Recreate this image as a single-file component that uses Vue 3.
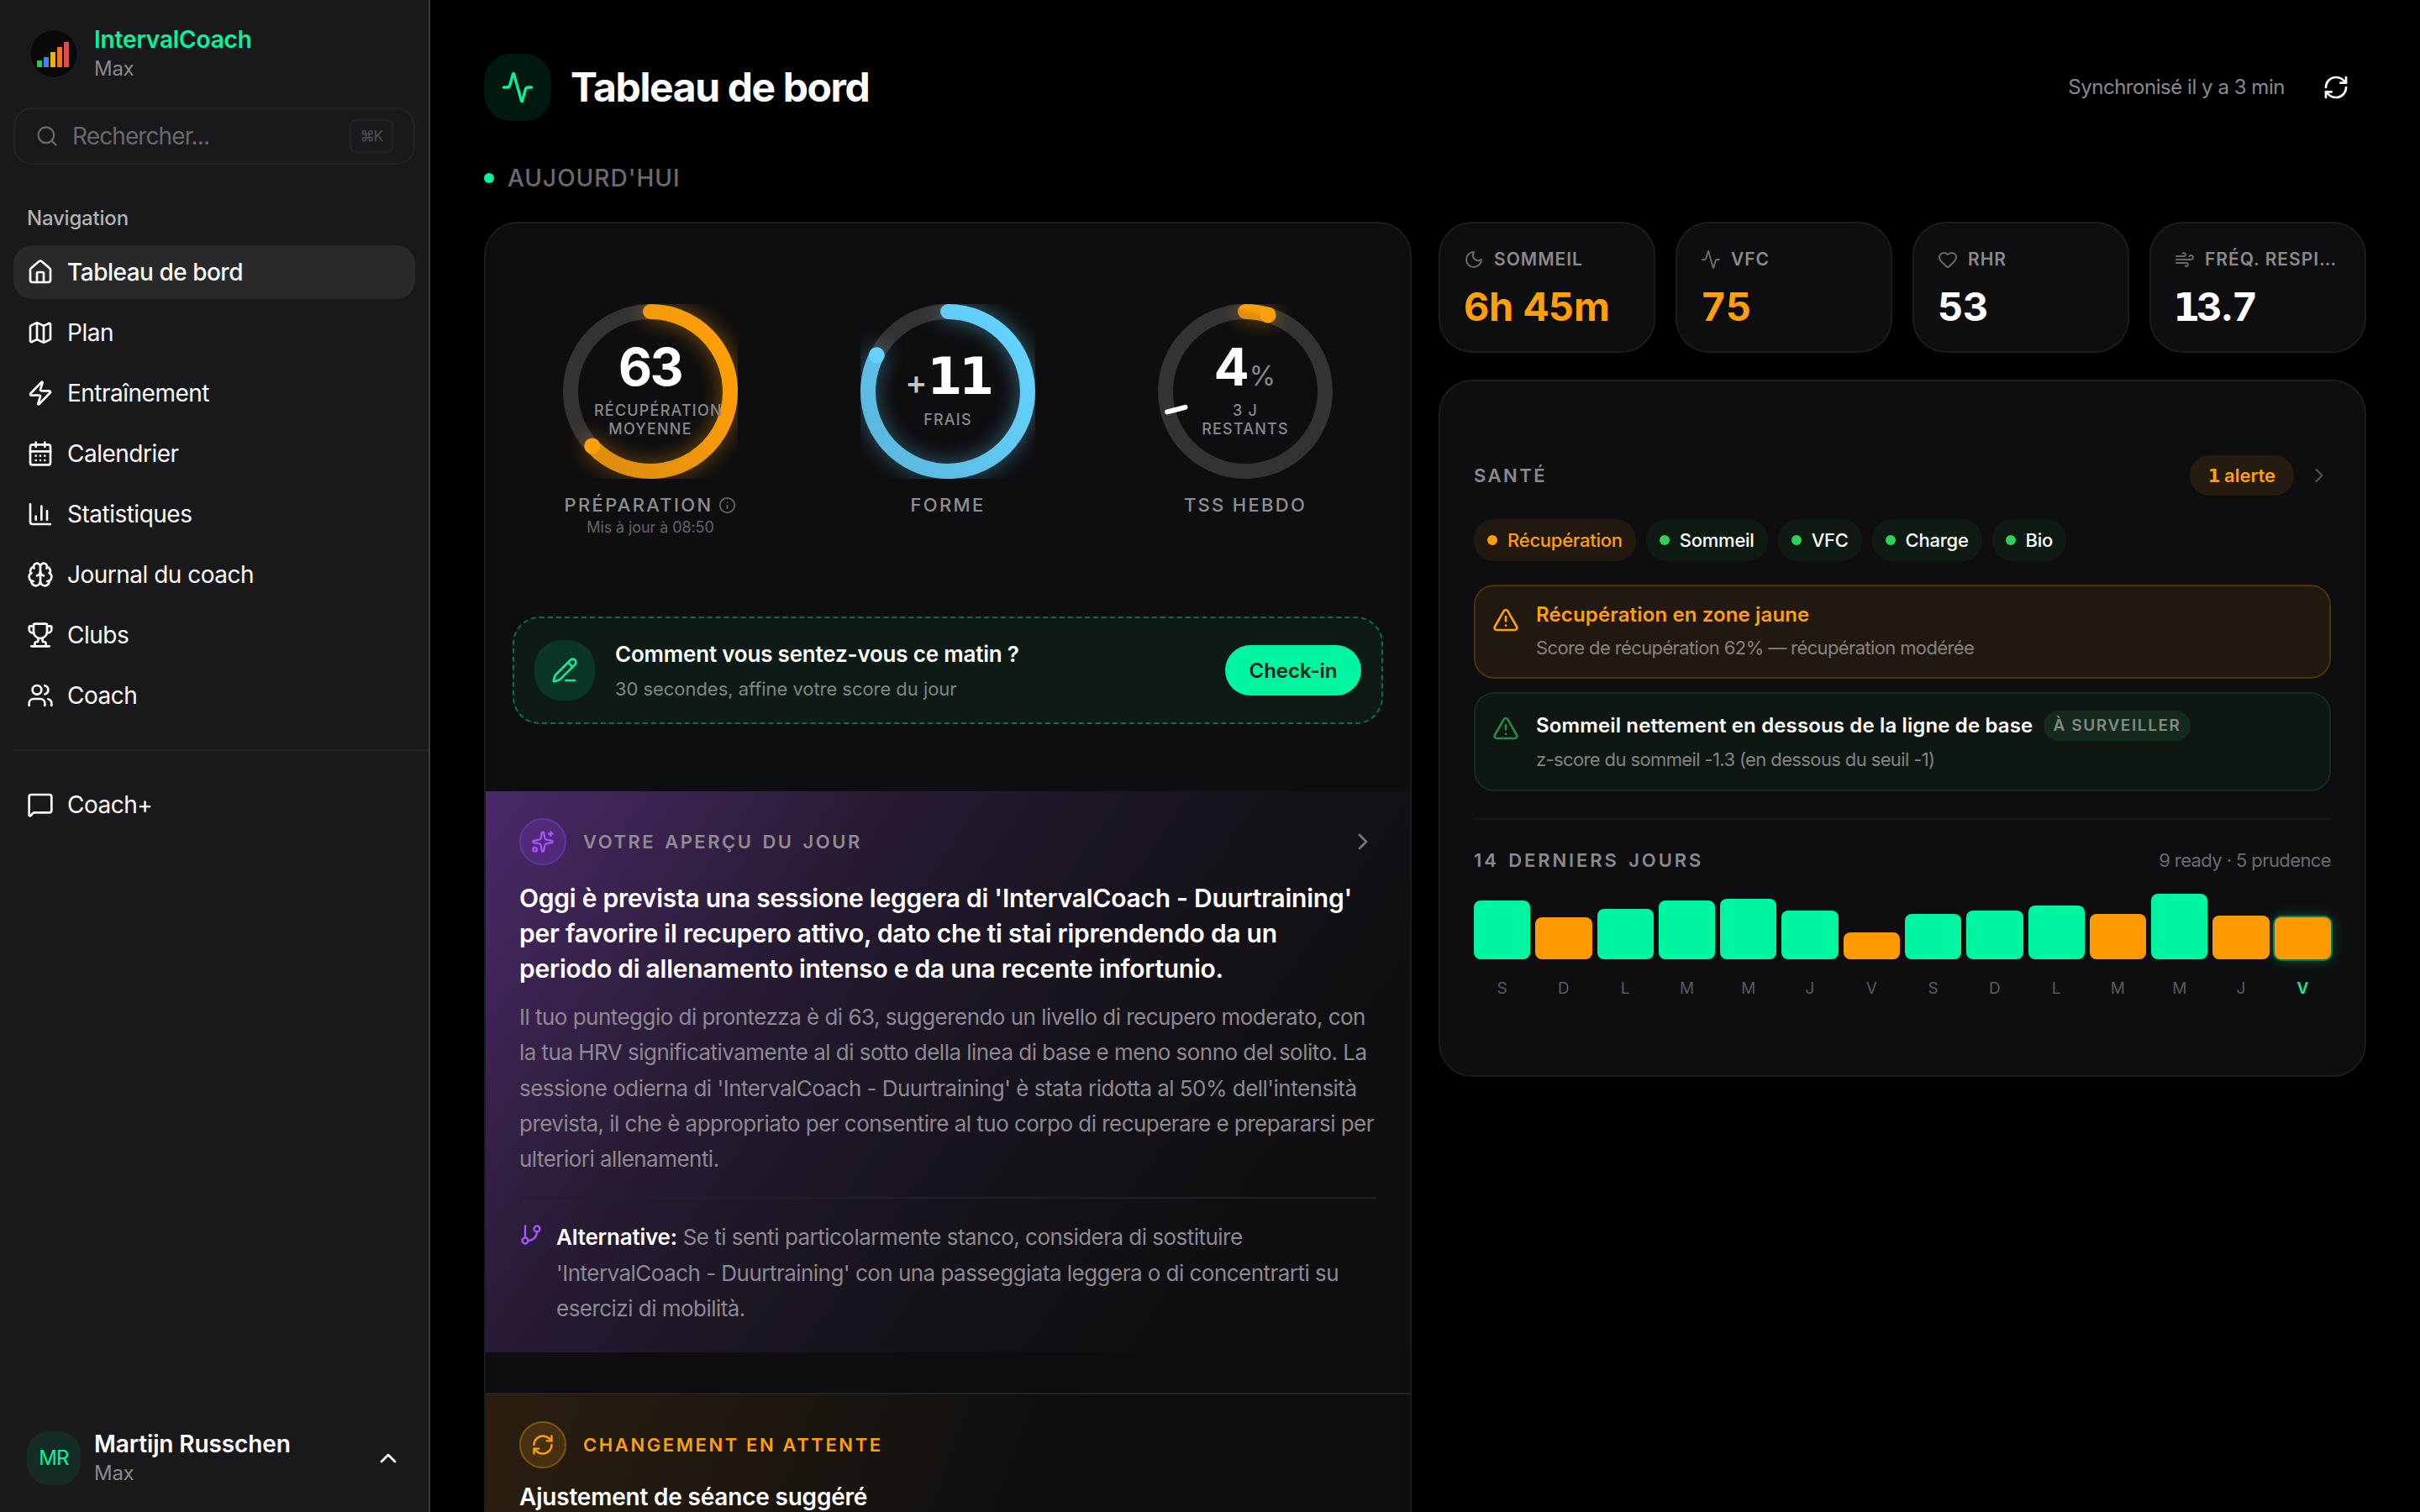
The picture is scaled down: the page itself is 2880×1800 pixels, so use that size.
<script setup>
import { h } from 'vue'

const icons = {
  house: ['M15 21v-8a1 1 0 0 0-1-1h-4a1 1 0 0 0-1 1v8', 'M3 10a2 2 0 0 1 .709-1.528l7-5.999a2 2 0 0 1 2.582 0l7 5.999A2 2 0 0 1 21 10v9a2 2 0 0 1-2 2H5a2 2 0 0 1-2-2z'],
  map: ['M14.106 5.553a2 2 0 0 0 1.788 0l3.659-1.83A1 1 0 0 1 21 4.619v12.764a1 1 0 0 1-.553.894l-4.553 2.277a2 2 0 0 1-1.788 0l-4.212-2.106a2 2 0 0 0-1.788 0l-3.659 1.83A1 1 0 0 1 3 19.381V6.618a1 1 0 0 1 .553-.894l4.553-2.277a2 2 0 0 1 1.788 0z', 'M15 5.764v15', 'M9 3.236v15'],
  zap: ['M4 14a1 1 0 0 1-.78-1.63l9.9-10.2a.5.5 0 0 1 .86.46l-1.92 6.02A1 1 0 0 0 13 10h7a1 1 0 0 1 .78 1.63l-9.9 10.2a.5.5 0 0 1-.86-.46l1.92-6.02A1 1 0 0 0 11 14z'],
  calendar: ['M8 2v4', 'M16 2v4', 'M5 4h14a2 2 0 0 1 2 2v14a2 2 0 0 1-2 2H5a2 2 0 0 1-2-2V6a2 2 0 0 1 2-2z', 'M3 10h18', 'M8 14h.01', 'M12 14h.01', 'M16 14h.01', 'M8 18h.01', 'M12 18h.01', 'M16 18h.01'],
  chart: ['M3 3v16a2 2 0 0 0 2 2h16', 'M18 17V9', 'M13 17V5', 'M8 17v-3'],
  brain: ['M12 18V5', 'M15 13a4.17 4.17 0 0 1-3-4 4.17 4.17 0 0 1-3 4', 'M17.598 6.5A3 3 0 1 0 12 5a3 3 0 1 0-5.598 1.5', 'M17.997 5.125a4 4 0 0 1 2.526 5.77', 'M18 18a4 4 0 0 0 2-7.464', 'M19.967 17.483A4 4 0 1 1 12 18a4 4 0 1 1-7.967-.517', 'M6 18a4 4 0 0 1-2-7.464', 'M6.003 5.125a4 4 0 0 0-2.526 5.77'],
  trophy: ['M6 9a6 6 0 0 0 12 0V3a1 1 0 0 0-1-1H7a1 1 0 0 0-1 1z', 'M6 4H3a1 1 0 0 0-1 1v2a3 3 0 0 0 3 3h1', 'M18 4h3a1 1 0 0 1 1 1v2a3 3 0 0 1-3 3h-1', 'M10 15v2a1 1 0 0 1-1 1 2 2 0 0 0-2 2v2', 'M14 15v2a1 1 0 0 0 1 1 2 2 0 0 1 2 2v2', 'M4 22h16'],
  users: ['M16 21v-2a4 4 0 0 0-4-4H6a4 4 0 0 0-4 4v2', 'M13 7a4 4 0 1 1-8 0 4 4 0 0 1 8 0z', 'M22 21v-2a4 4 0 0 0-3-3.87', 'M16 3.13a4 4 0 0 1 0 7.75'],
  message: ['M22 17a2 2 0 0 1-2 2H6.828a2 2 0 0 0-1.414.586l-2.202 2.202A.71.71 0 0 1 2 21.286V5a2 2 0 0 1 2-2h16a2 2 0 0 1 2 2z'],
  search: ['M19 11a8 8 0 1 1-16 0 8 8 0 0 1 16 0z', 'm21 21-4.34-4.34'],
  activity: ['M22 12h-2.48a2 2 0 0 0-1.93 1.46l-2.35 8.36a.25.25 0 0 1-.48 0L9.24 2.18a.25.25 0 0 0-.48 0l-2.35 8.36A2 2 0 0 1 4.49 12H2'],
  refresh: ['M3 12a9 9 0 0 1 9-9 9.75 9.75 0 0 1 6.74 2.74L21 8', 'M21 3v5h-5', 'M21 12a9 9 0 0 1-9 9 9.75 9.75 0 0 1-6.74-2.74L3 16', 'M8 16H3v5'],
  moon: ['M20.985 12.486a9 9 0 1 1-9.473-9.472c.405-.022.617.46.402.803a6 6 0 0 0 8.268 8.268c.344-.215.825-.004.803.401'],
  heart: ['M2 9.5a5.5 5.5 0 0 1 9.591-3.676.56.56 0 0 0 .818 0A5.49 5.49 0 0 1 22 9.5c0 2.29-1.5 4-3 5.5l-5.492 5.313a2 2 0 0 1-3 .019L5 15c-1.5-1.5-3-3.2-3-5.5'],
  wind: ['M12.8 19.6A2 2 0 1 0 14 16H2', 'M17.5 8a2.5 2.5 0 1 1 2 4H2', 'M9.8 4.4A2 2 0 1 1 11 8H2'],
  alert: ['m21.73 18-8-14a2 2 0 0 0-3.48 0l-8 14A2 2 0 0 0 4 21h16a2 2 0 0 0 1.73-3', 'M12 9v4', 'M12 17h.01'],
  pencil: ['M13 21h8', 'm15 5 4 4', 'M21.174 6.812a1 1 0 0 0-3.986-3.987L3.842 16.174a2 2 0 0 0-.5.83l-1.321 4.352a.5.5 0 0 0 .623.622l4.353-1.32a2 2 0 0 0 .83-.497z'],
  sparkles: ['M11.017 2.814a1 1 0 0 1 1.966 0l1.051 5.558a2 2 0 0 0 1.594 1.594l5.558 1.051a1 1 0 0 1 0 1.966l-5.558 1.051a2 2 0 0 0-1.594 1.594l-1.051 5.558a1 1 0 0 1-1.966 0l-1.051-5.558a2 2 0 0 0-1.594-1.594l-5.558-1.051a1 1 0 0 1 0-1.966l5.558-1.051a2 2 0 0 0 1.594-1.594z', 'M20 2v4', 'M22 4h-4', 'M6 20a2 2 0 1 1-4 0 2 2 0 0 1 4 0z'],
  branch: ['M6 3v12', 'M21 6a3 3 0 1 1-6 0 3 3 0 0 1 6 0z', 'M9 18a3 3 0 1 1-6 0 3 3 0 0 1 6 0z', 'M18 9a9 9 0 0 1-9 9'],
  info: ['M22 12a10 10 0 1 1-20 0 10 10 0 0 1 20 0z', 'M12 16v-4', 'M12 8h.01'],
  right: ['m9 18 6-6-6-6'],
  up: ['m18 15-6-6-6 6']
}

const Icon = (props) =>
  h(
    'svg',
    { class: 'icon', width: props.size, height: props.size, viewBox: '0 0 24 24' },
    icons[props.name].map((d) => h('path', { d }))
  )
Icon.props = ['name', 'size']

const nav = [
  { icon: 'house', label: 'Tableau de bord', active: true },
  { icon: 'map', label: 'Plan' },
  { icon: 'zap', label: 'Entraînement' },
  { icon: 'calendar', label: 'Calendrier' },
  { icon: 'chart', label: 'Statistiques' },
  { icon: 'brain', label: 'Journal du coach' },
  { icon: 'trophy', label: 'Clubs' },
  { icon: 'users', label: 'Coach' }
]

const R = 95

const rings = [
  { id: 'prep', color: '#ff9f0a', value: '63', caption: 'Récupération moyenne', label: 'Préparation', info: true, sub: 'Mis à jour à 08:50', pct: 0.63 },
  { id: 'form', color: '#64d2ff', prefix: '+', value: '11', caption: 'Frais', label: 'Forme', pct: 0.825 },
  { id: 'tss', color: '#ff9f0a', value: '4', suffix: '%', caption: '3 j restants', label: 'TSS hebdo', pct: 0.046, tick: 0.709 }
]

// point on the ring, measured clockwise from the top
const polar = (pct, r) => {
  const a = pct * 2 * Math.PI
  return { x: 104 + r * Math.sin(a), y: 104 - r * Math.cos(a) }
}

const metrics = [
  { icon: 'moon', label: 'Sommeil', value: '6h 45m', warn: true },
  { icon: 'activity', label: 'VFC', value: '75', warn: true },
  { icon: 'heart', label: 'RHR', value: '53' },
  { icon: 'wind', label: 'Fréq. respiratoire', one: '1', value: '3.7' }
]

const pills = [
  { label: 'Récupération', warn: true },
  { label: 'Sommeil' },
  { label: 'VFC' },
  { label: 'Charge' },
  { label: 'Bio' }
]

const days = [
  { d: 'S', v: 70 },
  { d: 'D', v: 50, warn: true },
  { d: 'L', v: 60 },
  { d: 'M', v: 70 },
  { d: 'M', v: 72 },
  { d: 'J', v: 58 },
  { d: 'V', v: 32, warn: true },
  { d: 'S', v: 54 },
  { d: 'D', v: 58 },
  { d: 'L', v: 64 },
  { d: 'M', v: 54, warn: true },
  { d: 'M', v: 78 },
  { d: 'J', v: 52, warn: true },
  { d: 'V', v: 50, warn: true, today: true }
]
</script>

<template>
  <div class="app">
    <aside class="sidebar">
      <div class="brand">
        <svg class="logo" width="58" height="58" viewBox="0 0 58 58">
          <circle cx="29" cy="29" r="28.5" fill="#0a0a0a" stroke="#232325" />
          <rect x="9" y="37" width="6" height="8" fill="#22c55e" />
          <rect x="17" y="33" width="6" height="12" fill="#3b82f6" />
          <rect x="25" y="27" width="6" height="18" fill="#eab308" />
          <rect x="33" y="21" width="6" height="24" fill="#f97316" />
          <rect x="41" y="15" width="6" height="30" fill="#ef4444" />
        </svg>
        <div>
          <div class="brand-name">IntervalCoach</div>
          <div class="brand-plan">Max</div>
        </div>
      </div>

      <div class="search">
        <Icon name="search" size="28" />
        <span class="search-text">Rechercher...</span>
        <kbd>⌘K</kbd>
      </div>

      <div class="nav-title">Navigation</div>
      <nav class="nav">
        <a v-for="n in nav" :key="n.label" class="nav-item" :class="{ active: n.active }">
          <Icon :name="n.icon" size="32" />
          <span>{{ n.label }}</span>
        </a>
      </nav>

      <div class="nav-sep"></div>
      <nav class="nav">
        <a class="nav-item">
          <Icon name="message" size="32" />
          <span>Coach+</span>
        </a>
      </nav>

      <div class="user">
        <div class="avatar">MR</div>
        <div class="user-text">
          <div class="user-name">Martijn Russchen</div>
          <div class="user-plan">Max</div>
        </div>
        <Icon name="up" size="32" />
      </div>
    </aside>

    <main class="main">
      <header class="header">
        <div class="header-icon"><Icon name="activity" size="40" /></div>
        <h1>Tableau de bord</h1>
        <span class="sync">Synchronisé il y a 3 min</span>
        <Icon name="refresh" size="32" class="sync-icon" />
      </header>

      <div class="today-title"><i class="today-dot"></i>Aujourd'hui</div>

      <div class="columns">
        <section class="card hero">
          <div class="rings">
            <div v-for="r in rings" :key="r.id" class="ring">
              <div class="ring-dial">
                <svg width="208" height="208" viewBox="0 0 208 208">
                  <defs>
                    <linearGradient :id="r.id" x1="0" y1="1" x2="1" y2="0.3">
                      <stop offset="0.1" :stop-color="r.color" stop-opacity="0.8" />
                      <stop offset="1" :stop-color="r.color" />
                    </linearGradient>
                  </defs>
                  <circle cx="104" cy="104" :r="R" fill="none" stroke="#333333" stroke-width="18" />
                  <g :style="{ filter: `drop-shadow(0 0 12px ${r.color}80)` }">
                    <path
                      :d="`M104 9A95 95 0 ${r.pct > 0.5 ? 1 : 0} 1 ${polar(r.pct, R).x} ${polar(r.pct, R).y}`"
                      fill="none"
                      :stroke="`url(#${r.id})`"
                      stroke-width="18"
                      stroke-linecap="round"
                    />
                    <circle :cx="polar(r.pct, R).x" :cy="polar(r.pct, R).y" r="9.5" :fill="r.color" />
                  </g>
                  <line
                    v-if="r.tick"
                    :x1="polar(r.tick, 96).x"
                    :y1="polar(r.tick, 96).y"
                    :x2="polar(r.tick, 74).x"
                    :y2="polar(r.tick, 74).y"
                    stroke="#fff"
                    stroke-width="6"
                    stroke-linecap="round"
                  />
                </svg>
                <div class="ring-center">
                  <div class="ring-value">
                    <small v-if="r.prefix">{{ r.prefix }}</small><b :class="{ slab: r.value === '11' }">{{ r.value }}</b><em v-if="r.suffix">{{ r.suffix }}</em>
                  </div>
                  <div class="ring-caption">{{ r.caption }}</div>
                </div>
              </div>
              <div class="ring-label">{{ r.label }}<Icon v-if="r.info" name="info" size="21" /></div>
              <div class="ring-sub">{{ r.sub }}</div>
            </div>
          </div>

          <div class="checkin">
            <div class="checkin-icon"><Icon name="pencil" size="32" /></div>
            <div class="checkin-text">
              <div class="checkin-title">Comment vous sentez-vous ce matin ?</div>
              <div class="checkin-sub">30 secondes, affine votre score du jour</div>
            </div>
            <button class="checkin-btn">Check-in</button>
          </div>

          <div class="insight">
            <div class="insight-head">
              <span class="badge-icon purple"><Icon name="sparkles" size="28" /></span>
              <span class="eyebrow">Votre aperçu du jour</span>
              <Icon name="right" size="32" class="insight-go" />
            </div>
            <p class="lead">
              Oggi è prevista una sessione leggera di 'IntervalCoach - Duurtraining'<br />
              per favorire il recupero attivo, dato che ti stai riprendendo da un<br />
              periodo di allenamento intenso e da una recente infortunio.
            </p>
            <p class="body">
              Il tuo punteggio di prontezza è di 63, suggerendo un livello di recupero moderato, con<br />
              la tua HRV significativamente al di sotto della linea di base e meno sonno del solito. La<br />
              sessione odierna di 'IntervalCoach - Duurtraining' è stata ridotta al 50% dell'intensità<br />
              prevista, il che è appropriato per consentire al tuo corpo di recuperare e prepararsi per<br />
              ulteriori allenamenti.
            </p>
            <div class="alt">
              <Icon name="branch" size="28" />
              <p class="body alt-text">
                <strong>Alternative:</strong> Se ti senti particolarmente stanco, considera di sostituire<br />
                'IntervalCoach - Duurtraining' con una passeggiata leggera o di concentrarti su<br />
                esercizi di mobilità.
              </p>
            </div>
          </div>

          <div class="pending">
            <div class="insight-head">
              <span class="badge-icon amber"><Icon name="refresh" size="28" /></span>
              <span class="eyebrow">Changement en attente</span>
            </div>
            <p class="lead">Ajustement de séance suggéré</p>
          </div>
        </section>

        <div class="side">
          <div class="metrics">
            <div v-for="m in metrics" :key="m.label" class="card metric">
              <div class="metric-head">
                <Icon :name="m.icon" size="24" />
                <span>{{ m.label }}</span>
              </div>
              <div class="metric-value" :class="{ warn: m.warn }"><span v-if="m.one" class="slab">{{ m.one }}</span>{{ m.value }}</div>
            </div>
          </div>

          <section class="card health">
            <div class="health-head">
              <span class="eyebrow">Santé</span>
              <span class="count"><span class="slab">1</span> alerte</span>
              <Icon name="right" size="28" class="dim" />
            </div>

            <div class="pills">
              <span v-for="p in pills" :key="p.label" class="pill" :class="{ warn: p.warn }"><i></i>{{ p.label }}</span>
            </div>

            <div class="alert warn">
              <Icon name="alert" size="32" />
              <div>
                <div class="alert-title">Récupération en zone jaune</div>
                <div class="alert-sub">Score de récupération 62% — récupération modérée</div>
              </div>
            </div>
            <div class="alert ok">
              <Icon name="alert" size="32" />
              <div>
                <div class="alert-title">Sommeil nettement en dessous de la ligne de base <span class="tag">À surveiller</span></div>
                <div class="alert-sub">z-score du sommeil -1.3 (en dessous du seuil -1)</div>
              </div>
            </div>

            <div class="history">
              <div class="history-head">
                <span class="eyebrow">14 derniers jours</span>
                <span class="history-sum">9 ready · 5 prudence</span>
              </div>
              <div class="bars">
                <div v-for="(b, i) in days" :key="i" class="day" :class="{ today: b.today }">
                  <div class="bar" :class="{ warn: b.warn }" :style="{ height: b.v + 'px' }"></div>
                  <span>{{ b.d }}</span>
                </div>
              </div>
            </div>
          </section>
        </div>
      </div>
    </main>
  </div>
</template>

<style>
body {
  background: #000;
}
</style>

<style scoped>
.app {
  display: flex;
  width: 2880px;
  height: 1800px;
  overflow: hidden;
  background: #000;
  color: #fff;
  font-family: Inter, 'Liberation Sans', sans-serif;
  font-size: 28px;
}

.app * {
  box-sizing: border-box;
}

.icon {
  flex: none;
  fill: none;
  stroke: currentColor;
  stroke-width: 2;
  stroke-linecap: round;
  stroke-linejoin: round;
}

p,
h1 {
  margin: 0;
}

/* Sidebar */
.sidebar {
  display: flex;
  flex-direction: column;
  flex: none;
  width: 512px;
  background: #19191b;
  border-right: 2px solid #39393b;
}

.brand {
  display: flex;
  align-items: center;
  gap: 19px;
  height: 128px;
  padding-left: 35px;
}

.brand-name {
  line-height: 36px;
  margin-top: -1px;
  color: #00f5a0;
  font-weight: 600;
  letter-spacing: -0.15px;
}

.brand-plan,
.user-plan {
  line-height: 34px;
  font-size: 24px;
  letter-spacing: -0.3px;
  color: #8a8a8c;
}

.search {
  display: flex;
  align-items: center;
  height: 68px;
  margin: 0 16px;
  padding: 0 24px;
  border: 2px solid #242426;
  border-radius: 22px;
  color: #69696b;
}

.search-text {
  flex: 1;
  margin-left: 16px;
  letter-spacing: -0.9px;
}

kbd {
  width: 52px;
  height: 40px;
  border: 2px solid #242427;
  border-radius: 8px;
  background: #1b1b1e;
  color: #525254;
  font: 17px/36px Inter, sans-serif;
  letter-spacing: -1px;
  text-align: center;
}

.nav-title {
  margin: 48px 0 16px 32px;
  line-height: 32px;
  font-size: 24px;
  font-weight: 500;
  letter-spacing: -0.2px;
  color: #b2b2b3;
}

.nav {
  display: flex;
  flex-direction: column;
  gap: 8px;
  margin: 0 16px;
}

.nav-item {
  display: flex;
  align-items: center;
  gap: 16px;
  height: 64px;
  padding: 0 16px;
  border-radius: 22px;
  color: #fafafa;
  letter-spacing: -0.5px;
}

.nav-item.active {
  background: #29292b;
  font-weight: 500;
}

.nav-sep {
  height: 2px;
  margin: 32px 0 32px 16px;
  background: #252527;
}

.user {
  display: flex;
  align-items: center;
  gap: 16px;
  height: 96px;
  margin: auto 32px 16px;
}

.avatar {
  width: 64px;
  height: 64px;
  border-radius: 26px;
  background: #152b25;
  color: #00f5a0;
  font-size: 24px;
  letter-spacing: -0.8px;
  line-height: 64px;
  text-align: center;
}

.user-text {
  flex: 1;
}

.user-name {
  line-height: 36px;
  font-weight: 600;
  letter-spacing: -0.12px;
}

/* Main area */
.main {
  flex: 1;
  padding: 64px 64px 0;
}

.header {
  display: flex;
  align-items: center;
  height: 80px;
}

.header-icon {
  display: flex;
  align-items: center;
  justify-content: center;
  width: 80px;
  height: 80px;
  border-radius: 32px;
  background: #00190f;
  color: #00f5a0;
}

h1 {
  flex: 1;
  margin: -2px 0 0 23px;
  font-size: 48px;
  font-weight: 700;
  letter-spacing: -1.4px;
}

.sync {
  margin-top: -1px;
  font-size: 24px;
  letter-spacing: -0.46px;
  color: #8a8a8c;
}

.sync-icon {
  margin: 0 20px 0 45px;
}

.today-title {
  display: flex;
  align-items: center;
  margin: 50px 0 34px;
  line-height: 36px;
  font-weight: 500;
  letter-spacing: 1px;
  text-transform: uppercase;
  color: #6b6b6d;
}

.today-dot {
  width: 12px;
  height: 12px;
  margin-right: 16px;
  border-radius: 50%;
  background: #00f5a0;
}

.columns {
  display: grid;
  grid-template-columns: 1fr 1fr;
  gap: 32px;
  align-items: start;
}

.card {
  border: 2px solid #1c1c1e;
  border-radius: 40px;
  background: #0e0e10;
}

.hero {
  overflow: hidden;
}

/* the "1" with a foot comes from DejaVu */
.slab {
  font-family: 'DejaVu Sans', sans-serif;
}

/* Rings */
.rings {
  display: grid;
  grid-template-columns: repeat(3, 354px);
  justify-content: center;
  padding-top: 96px;
}

.ring {
  display: flex;
  flex-direction: column;
  align-items: center;
}

.ring-dial {
  display: grid;
  place-items: center;
  width: 208px;
  height: 208px;
}

.ring-dial > * {
  grid-area: 1 / 1;
}

.ring-center {
  z-index: 1;
  width: 134px;
  margin-top: -6px;
  text-align: center;
}

.ring-value {
  height: 66px;
  line-height: 66px;
  white-space: nowrap;
}

.ring-value b {
  font-size: 62px;
  font-weight: 700;
  font-feature-settings: 'tnum';
  letter-spacing: -2px;
}

.ring-value b.slab {
  font-size: 60px;
  letter-spacing: -4px;
}

.ring-value small {
  font-size: 40px;
  font-weight: 500;
  color: #c7c7c8;
}

.ring-value em {
  margin-left: 3px;
  font-size: 32px;
  font-style: normal;
  color: #8a8a8c;
}

.ring-caption {
  margin-top: 8px;
  line-height: 22px;
  font-size: 18px;
  font-weight: 500;
  letter-spacing: 1.2px;
  text-transform: uppercase;
  color: #8a8a8c;
}

.ring-label {
  display: flex;
  align-items: center;
  gap: 7px;
  margin-top: 16px;
  line-height: 30px;
  font-size: 22px;
  font-weight: 500;
  letter-spacing: 2.3px;
  text-transform: uppercase;
  color: #8f8f91;
}

.ring-label .icon {
  color: #69696b;
}

.ring-sub {
  height: 24px;
  line-height: 24px;
  font-size: 18px;
  letter-spacing: -0.1px;
  color: #636365;
}

/* Check-in banner */
.checkin {
  display: flex;
  align-items: center;
  height: 128px;
  margin: 94px 32px 80px;
  padding: 0 24px;
  border: 2px dashed #0b6f4d;
  border-radius: 32px;
  background: #0d1a15;
}

.checkin-icon {
  display: flex;
  align-items: center;
  justify-content: center;
  width: 72px;
  height: 72px;
  border-radius: 32px;
  background: #0b3526;
  color: #15e69b;
}

.checkin-text {
  flex: 1;
  margin: 2px 0 0 24px;
}

.checkin-title {
  line-height: 42px;
  font-size: 26px;
  font-weight: 600;
  letter-spacing: -0.2px;
}

.checkin-sub {
  line-height: 40px;
  font-size: 22px;
  letter-spacing: -0.05px;
  color: #7f8784;
}

.checkin-btn {
  width: 162px;
  height: 60px;
  border: 0;
  border-radius: 30px;
  background: #00f5a0;
  color: #04291c;
  font: 600 24px Inter, sans-serif;
}

/* Insight */
.insight {
  height: 668px;
  padding: 32px 40px 0;
  background: linear-gradient(125deg, #4a2969 0%, #301f40 23%, #281b35 30%, #1f182a 40%, #151219 61%, #0f0f11 80%, #0e0e10 100%);
}

.insight-head {
  display: flex;
  align-items: center;
  height: 56px;
}

.badge-icon {
  display: flex;
  align-items: center;
  justify-content: center;
  width: 56px;
  height: 56px;
  margin-right: 20px;
  border: 2px solid;
  border-radius: 50%;
}

.badge-icon.purple {
  border-color: #66379a;
  background: #51297a;
  color: #a855f7;
}

.badge-icon.amber {
  border-color: #80550f;
  background: #463010;
  color: #ff9f0a;
}

.eyebrow {
  flex: 1;
  font-size: 22px;
  font-weight: 600;
  letter-spacing: 2.5px;
  word-spacing: 3px;
  text-transform: uppercase;
  color: #8f8b94;
}

.insight-go {
  color: #77777a;
}

.lead {
  margin-top: 18px;
  line-height: 42px;
  font-size: 30px;
  font-weight: 600;
  letter-spacing: -0.26px;
  white-space: nowrap;
}

.body {
  margin-top: 16px;
  line-height: 42.25px;
  font-size: 26px;
  letter-spacing: -0.53px;
  color: #8d8a91;
  white-space: nowrap;
}

.body strong {
  font-weight: 600;
  letter-spacing: -0.2px;
  color: #fff;
}

.alt {
  display: flex;
  gap: 16px;
  margin-top: 24px;
  padding-top: 24px;
  border-top: 2px solid #222024;
  color: #a855f7;
}

.alt .icon {
  margin-top: 5px;
}

.alt-text {
  margin-top: 1px;
}

.pending {
  height: 260px;
  margin-top: 48px;
  padding: 32px 40px 0;
  border-top: 2px solid #232325;
  background: linear-gradient(110deg, #2b1e10 0%, #1a150f 35%, #0e0e10 60%);
}

.pending .eyebrow {
  color: #ff9f0a;
  letter-spacing: 2.6px;
  word-spacing: 0;
}

.pending .lead {
  margin-top: 13px;
  font-size: 28px;
  letter-spacing: -0.2px;
}

/* Metrics */
.metrics {
  display: grid;
  grid-template-columns: repeat(4, 1fr);
  gap: 24px;
  margin-bottom: 32px;
}

.metric {
  min-width: 0;
  height: 156px;
  padding: 27px 28px 0;
}

.metric-head {
  display: flex;
  align-items: center;
  gap: 12px;
  line-height: 32px;
  font-size: 21px;
  font-weight: 600;
  letter-spacing: 1px;
  text-transform: uppercase;
  color: #8a8a8c;
}

.metric-head .icon {
  color: #69696b;
}

.metric-head span {
  overflow: hidden;
  text-overflow: ellipsis;
  white-space: nowrap;
}

.metric-value {
  height: 56px;
  margin-top: 12px;
  line-height: 56px;
  font-size: 47px;
  font-weight: 700;
  letter-spacing: -0.4px;
  font-feature-settings: 'tnum';
}

.metric-value .slab {
  margin-left: -2px;
  font-size: 46px;
  letter-spacing: -4px;
}

.metric-value.warn {
  color: #ff9f0a;
}

/* Health */
.health {
  height: 830px;
  padding: 88px 40px 0;
}

.health-head {
  display: flex;
  align-items: center;
  height: 48px;
}

.health-head .eyebrow,
.history-head .eyebrow {
  color: #8a8a8c;
}

.history-head .eyebrow {
  letter-spacing: 2.9px;
}

.count {
  width: 124px;
  height: 48px;
  margin-right: 16px;
  border-radius: 24px;
  background: #261b0f;
  color: #ff9f0a;
  font-size: 22px;
  font-weight: 600;
  line-height: 48px;
  text-align: center;
}

.count .slab {
  font-size: 21px;
  font-weight: 700;
  letter-spacing: -1px;
}

.dim {
  color: #515153;
}

.pills {
  display: flex;
  gap: 12px;
  margin: 28px 0;
}

.pill {
  display: flex;
  align-items: center;
  gap: 12px;
  height: 50px;
  padding: 0 16px;
  border-radius: 24px;
  background: #0f1a13;
  font-size: 22px;
  font-weight: 500;
  letter-spacing: -0.25px;
}

.pill i {
  width: 12px;
  height: 12px;
  border-radius: 50%;
  background: #30d158;
}

.pill.warn {
  background: #21190f;
  color: #ff9f0a;
}

.pill.warn i {
  background: #ff9f0a;
}

.alert {
  display: flex;
  gap: 20px;
  margin-bottom: 16px;
  padding: 0 20px;
  border: 2px solid;
  border-radius: 24px;
}

.alert.warn {
  height: 112px;
  padding-top: 14px;
  border-color: #4a3210;
  background: #21190f;
}

.alert.ok {
  height: 118px;
  padding-top: 18px;
  border-color: #142c1c;
  background: #0f1712;
}

.alert .icon {
  margin-top: 10px;
}

.alert.warn .icon,
.alert.warn .alert-title {
  color: #ff9f0a;
}

.alert.ok .icon {
  margin-top: 7px;
  color: #268a43;
}

.alert-title {
  display: flex;
  align-items: center;
  line-height: 40px;
  font-size: 24px;
  font-weight: 600;
  letter-spacing: 0.14px;
}

.alert-sub {
  line-height: 38px;
  font-size: 22px;
  letter-spacing: -0.62px;
  color: #858381;
}

.alert.ok .alert-sub {
  line-height: 41px;
}

.tag {
  height: 36px;
  margin-left: 13px;
  padding: 0 11px;
  border-radius: 18px;
  background: #142b1b;
  color: #848a86;
  font-size: 19px;
  line-height: 36px;
  letter-spacing: 1.6px;
  text-transform: uppercase;
}

.history {
  margin-top: 32px;
  border-top: 2px solid #171719;
}

.history-head {
  display: flex;
  align-items: center;
  height: 36px;
  margin: 30px 0 22px;
}

.history-sum {
  font-size: 22px;
  letter-spacing: -0.6px;
  color: #6b6b6d;
}

.bars {
  display: flex;
  align-items: flex-end;
  gap: 6px;
  height: 130px;
}

.day {
  flex: 1;
  text-align: center;
}

.day span {
  display: block;
  margin-top: 18px;
  line-height: 34px;
  font-size: 19px;
  color: #5a5a5c;
}

.bar {
  border-radius: 8px;
  background: #00f5a0;
}

.bar.warn {
  background: #ff9a00;
}

.today .bar {
  box-shadow: 0 0 0 2px #087c56, 0 0 16px rgba(0, 245, 160, 0.35);
}

.today span {
  color: #00f5a0;
  font-weight: 600;
}
</style>
